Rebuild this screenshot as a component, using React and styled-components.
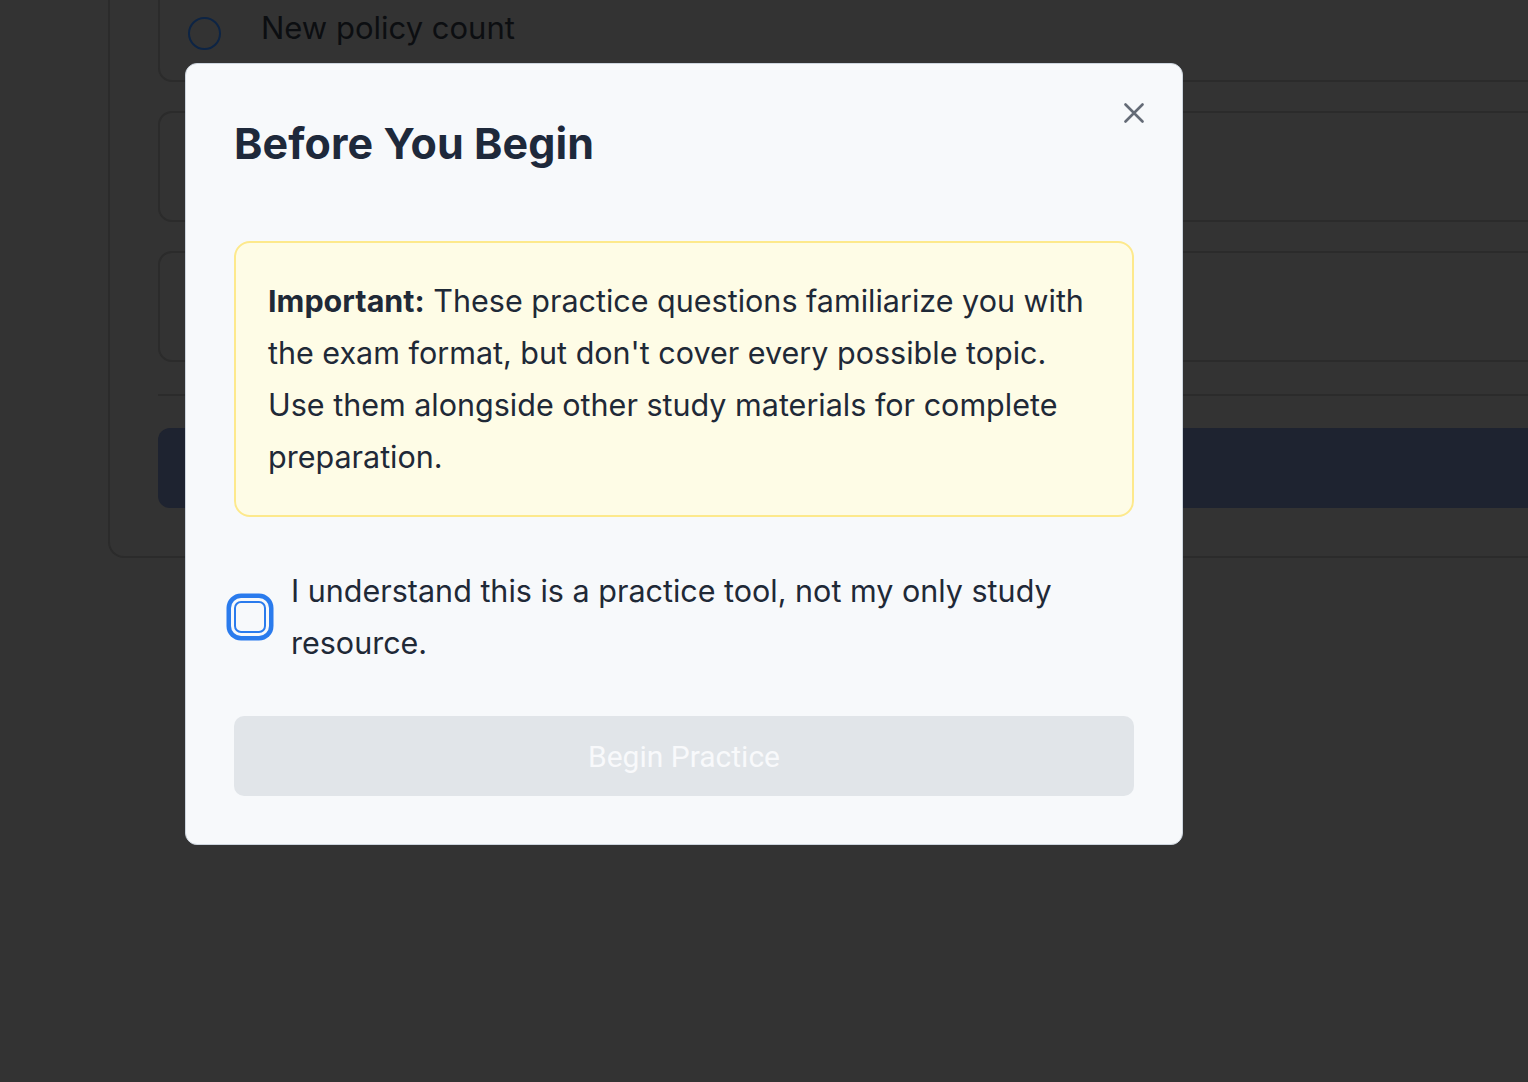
import React from "react";
import styled, { createGlobalStyle } from "styled-components";

const Global = createGlobalStyle`
  html, body { margin: 0; padding: 0; }
  body {
    background: #333333;
    font-family: Inter, "Noto Sans", "Liberation Sans", sans-serif;
    overflow: hidden;
    width: 1528px;
    height: 1082px;
  }
`;

const Page = styled.div`
  position: relative;
  width: 1528px;
  height: 1082px;
  overflow: hidden;
  padding-left: 108px;
  box-sizing: border-box;
`;

const OuterCard = styled.div`
  width: 1600px;
  box-sizing: border-box;
  border: 2px solid #2b2b2b;
  border-top: none;
  border-radius: 0 0 16px 16px;
  padding: 0 0 48px 48px;
  display: flex;
  flex-direction: column;
`;

const OptionCard = styled.div`
  height: ${(p) => p.$h}px;
  box-sizing: border-box;
  border: 2px solid #2b2b2b;
  border-top: ${(p) => (p.$cut ? "none" : "2px solid #2b2b2b")};
  border-radius: ${(p) => (p.$cut ? "0 0 14px 14px" : "14px")};
  margin-top: ${(p) => p.$mt || 0}px;
  padding-bottom: ${(p) => p.$pb || 0}px;
  display: flex;
  align-items: center;
  gap: 40px;
  padding-left: 28px;
`;

const Radio = styled.span`
  width: 29px;
  height: 29px;
  border-radius: 50%;
  border: 2px solid #0d2444;
  margin-top: 10px;
`;

const OptionText = styled.span`
  font-size: 31px;
  color: #0c0e11;
  margin-bottom: 2px;
`;

const Separator = styled.div`
  height: 2px;
  background: #2b2b2b;
  margin-top: 32px;
`;

const DarkBar = styled.div`
  height: 80px;
  margin-top: 32px;
  background: #1e2330;
  border-radius: 12px;
`;

const Overlay = styled.div`
  position: absolute;
  inset: 0;
  padding: 63px 0 0 185px;
  display: flex;
  align-items: flex-start;
`;

const Modal = styled.div`
  position: relative;
  width: 998px;
  box-sizing: border-box;
  background: #f7f9fb;
  border: 1px solid #cdd5de;
  border-radius: 12px;
  padding: 48px;
  display: flex;
  flex-direction: column;
`;

const CloseButton = styled.button`
  position: absolute;
  top: 39px;
  right: 38px;
  width: 20px;
  height: 20px;
  padding: 0;
  border: none;
  background: none;
  display: flex;
  color: #646b76;
`;

const Title = styled.h2`
  margin: 0 0 66px;
  font-size: 43px;
  line-height: 63px;
  font-weight: 700;
  letter-spacing: 0.1px;
  color: #1e293b;
`;

const Alert = styled.div`
  border: 2px solid #fde98c;
  background: #fefce6;
  border-radius: 16px;
  padding: 32px;
  font-size: 30.5px;
  line-height: 52px;
  color: #1f2937;
  b { font-weight: 700; }
`;

const CheckRow = styled.label`
  margin-top: 48px;
  display: flex;
  align-items: center;
  gap: 25px;
`;

const Box = styled.span`
  flex: none;
  width: 32px;
  height: 32px;
  box-sizing: border-box;
  border: 2px solid #2a7bed;
  border-radius: 7px;
  background: #f7f9fb;
  box-shadow: 0 0 0 3px #f7f9fb, 0 0 0 7.5px #2a7bed;
`;

const CheckText = styled.span`
  font-size: 30.5px;
  line-height: 52px;
  color: #1f2937;
  max-width: 842px;
`;

const BeginButton = styled.button`
  margin-top: 47px;
  height: 80px;
  border: none;
  border-radius: 10px;
  background: #e1e5e9;
  color: #f8f9fb;
  font-family: Roboto, "Liberation Sans", sans-serif;
  font-size: 30px;
  font-weight: 400;
`;

export default function App() {
  return (
    <>
      <Global />
      <Page>
        <OuterCard>
          <OptionCard $h={82} $pb={24} $cut>
            <Radio />
            <OptionText>New policy count</OptionText>
          </OptionCard>
          <OptionCard $h={111} $mt={29} />
          <OptionCard $h={111} $mt={29} />
          <Separator />
          <DarkBar />
        </OuterCard>
        <Overlay>
          <Modal>
            <CloseButton aria-label="Close">
              <svg width="20" height="20" viewBox="0 0 20 20" fill="none">
                <path d="M1.5 1.5L18.5 18.5M18.5 1.5L1.5 18.5" stroke="currentColor" strokeWidth="2.6" strokeLinecap="round" />
              </svg>
            </CloseButton>
            <Title>Before You Begin</Title>
            <Alert>
              <b>Important:</b> These practice questions familiarize you with the exam format, but don't cover every possible topic. Use them alongside other study materials for complete preparation.
            </Alert>
            <CheckRow>
              <Box />
              <CheckText>I understand this is a practice tool, not my only study resource.</CheckText>
            </CheckRow>
            <BeginButton disabled>Begin Practice</BeginButton>
          </Modal>
        </Overlay>
      </Page>
    </>
  );
}
